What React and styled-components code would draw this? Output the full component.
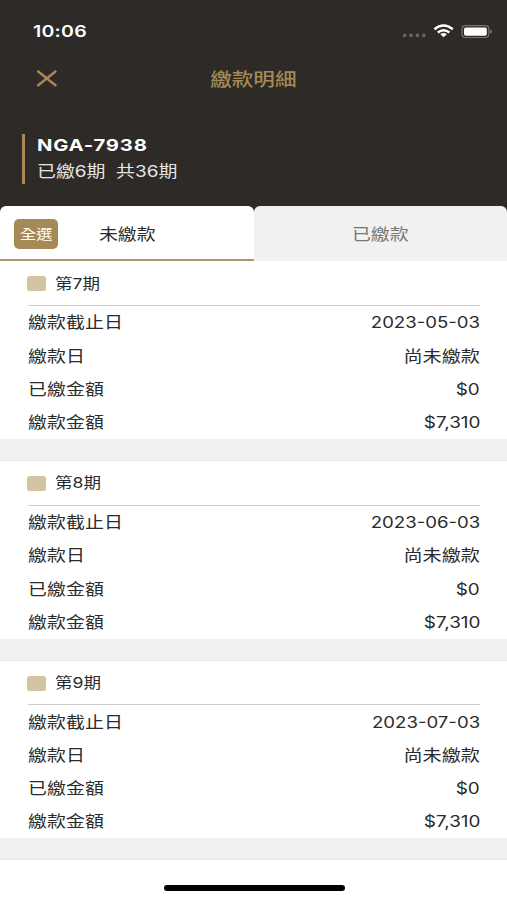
import React from 'react';
import styled, { createGlobalStyle } from 'styled-components';

const GlobalStyle = createGlobalStyle`
  * { box-sizing: border-box; }
  body {
    margin: 0;
    background: #fff;
    font-family: Inter, "Noto Sans CJK TC", sans-serif;
    color: #2b2b2b;
  }
`;

// Wide lettering: every label is stretched horizontally from its anchor side.
const Label = styled.span`
  display: block;
  white-space: pre;
  font-size: ${(p) => p.$size}px;
  line-height: ${(p) => p.$line || 20}px;
  font-weight: ${(p) => p.$weight || 400};
  color: ${(p) => p.$color || 'inherit'};
  letter-spacing: ${(p) => p.$spacing || 0}px;
  transform: scaleX(${(p) => p.$stretch || 1.22});
  transform-origin: ${(p) => p.$anchor || 'left'} center;
`;

const Screen = styled.main`
  width: 507px;
  height: 900px;
  display: flex;
  flex-direction: column;
  overflow: hidden;
  background: #fff;
`;

const Header = styled.header`
  height: 206px;
  flex: none;
  background: #2e2a27;
`;

const StatusBar = styled.div`
  height: 62px;
  padding: 21px 15.5px 0 32.5px;
  display: flex;
  justify-content: space-between;
`;

const StatusIcons = styled.svg`
  width: 92px;
  height: 20px;
`;

const TitleBar = styled.div`
  height: 34px;
  padding: 0 36px;
  display: grid;
  grid-template-columns: 22px 1fr 22px;
  align-items: center;
`;

const CloseIcon = styled.svg`
  width: 22px;
  height: 18px;
`;

const Contract = styled.section`
  height: 50px;
  margin: 38px 0 0 22px;
  padding: 1px 0 0 11.6px;
  border-left: 3px solid #a68a56;
`;

const Tabs = styled.nav`
  height: 55.4px;
  flex: none;
  display: grid;
  grid-template-columns: 254px 253px;
  background: linear-gradient(#2e2a27 12px, #fff 12px);
`;

const Tab = styled.div`
  display: grid;
  grid-template-columns: ${(p) => (p.$active ? '44px 1fr 44px' : '1fr')};
  align-items: center;
  padding: 0 14px;
  border-radius: 6px 6px 0 0;
  background: ${(p) => (p.$active ? '#fff' : '#f1f1f1')};
  box-shadow: ${(p) => (p.$active ? 'inset 0 -2px #ad956a' : 'none')};
`;

const SelectAll = styled.button`
  width: 44px;
  height: 30px;
  padding: 0;
  border: 0;
  border-radius: 5px;
  background: #a68a56;
  font-family: inherit;
  display: flex;
  align-items: center;
  justify-content: center;
`;

const Centered = styled.div`
  display: flex;
  justify-content: center;
  padding-top: ${(p) => p.$drop || 0}px;
`;

const Card = styled.article`
  flex: none;
  height: 177.6px;
  padding: 0 27px 0 28px;
`;

const CardHead = styled.div`
  height: 44.5px;
  padding-top: 1px;
  display: flex;
  align-items: center;
  gap: 9px;
  border-bottom: 1px solid #cfcfcf;
`;

const Check = styled.span`
  width: 19px;
  height: 15px;
  margin-left: -1px;
  border-radius: 2.5px;
  background: #d5c4a1;
`;

const Row = styled.div`
  height: 33.25px;
  padding-top: 1.6px;
  display: flex;
  align-items: center;
  justify-content: space-between;
`;

const Gap = styled.div`
  flex: none;
  height: 22.1px;
  background: #f0f0f0;
  border-bottom: 1px solid #e8e8e8;
`;

const Footer = styled.footer`
  flex: 1;
  display: flex;
  justify-content: center;
  padding: 24.8px 0 0 1px;
`;

const HomeIndicator = styled.div`
  width: 181px;
  height: 6px;
  border-radius: 3px;
  background: #000;
`;

const periods = [
  { name: '第7期', due: '2023-05-03' },
  { name: '第8期', due: '2023-06-03' },
  { name: '第9期', due: '2023-07-03' },
];

function Field({ name, value, stretch }) {
  return (
    <Row>
      <Label $size={15.5} $spacing={0.05}>{name}</Label>
      <Label $size={15.5} $anchor="right" $stretch={stretch}>{value}</Label>
    </Row>
  );
}

export default function App() {
  return (
    <>
      <GlobalStyle />
      <Screen>
        <Header>
          <StatusBar>
            <Label $size={16} $weight={600} $color="#fff" $spacing={0.2}>10:06</Label>
            <StatusIcons viewBox="0 0 92 20">
              <g fill="#696663">
                <circle cx="4.7" cy="14.4" r="1.8" />
                <circle cx="11" cy="14.4" r="1.8" />
                <circle cx="17.4" cy="14.4" r="1.8" />
                <circle cx="23.8" cy="14.4" r="1.8" />
              </g>
              <g fill="none" stroke="#fff" strokeWidth="2.4">
                <path d="M34.4 8.2Q43.6 .8 52.8 8.2" />
                <path d="M37.8 11.5Q43.6 6.9 49.4 11.5" />
              </g>
              <path d="M40.3 13.3Q43.6 10.9 46.9 13.3L43.6 16.2Z" fill="#fff" />
              <rect x="62" y="4.7" width="26.8" height="11.8" rx="3.4" fill="none" stroke="#777471" strokeWidth="1.2" />
              <rect x="64" y="6.4" width="22.8" height="8.4" rx="1.8" fill="#fff" />
              <path d="M90 8.4Q92 9 92 10.5T90 12.6Z" fill="#777471" />
            </StatusIcons>
          </StatusBar>
          <TitleBar>
            <CloseIcon viewBox="0 0 22 18" fill="none" stroke="#a68a56" strokeWidth="2.5" strokeLinecap="round">
              <path d="M2.2 1.6L19.4 15.2M19.4 1.6L2.2 15.2" />
            </CloseIcon>
            <Centered $drop={1}>
              <Label $size={17.7} $color="#a68a56" $weight={500} $anchor="center">繳款明細</Label>
            </Centered>
          </TitleBar>
          <Contract>
            <Label $size={16.6} $weight={700} $color="#fff" $spacing={0.65}>NGA-7938</Label>
            <Label $size={15.5} $line={34} $color="#e6e5e4">已繳6期  共36期</Label>
          </Contract>
        </Header>
        <Tabs>
          <Tab $active>
            <SelectAll>
              <Label $size={13.3} $color="#fff" $anchor="center">全選</Label>
            </SelectAll>
            <Centered $drop={2}>
              <Label $size={15.5} $anchor="center">未繳款</Label>
            </Centered>
          </Tab>
          <Tab>
            <Centered $drop={2}>
              <Label $size={15.5} $color="#777" $anchor="center">已繳款</Label>
            </Centered>
          </Tab>
        </Tabs>
        {periods.map((period) => (
          <React.Fragment key={period.name}>
            <Card>
              <CardHead>
                <Check />
                <Label $size={14.4} $line={22}>{period.name}</Label>
              </CardHead>
              <Field name="繳款截止日" value={period.due} stretch={1.2} />
              <Field name="繳款日" value="尚未繳款" stretch={1.235} />
              <Field name="已繳金額" value="$0" />
              <Field name="繳款金額" value="$7,310" />
            </Card>
            <Gap />
          </React.Fragment>
        ))}
        <Footer>
          <HomeIndicator />
        </Footer>
      </Screen>
    </>
  );
}
